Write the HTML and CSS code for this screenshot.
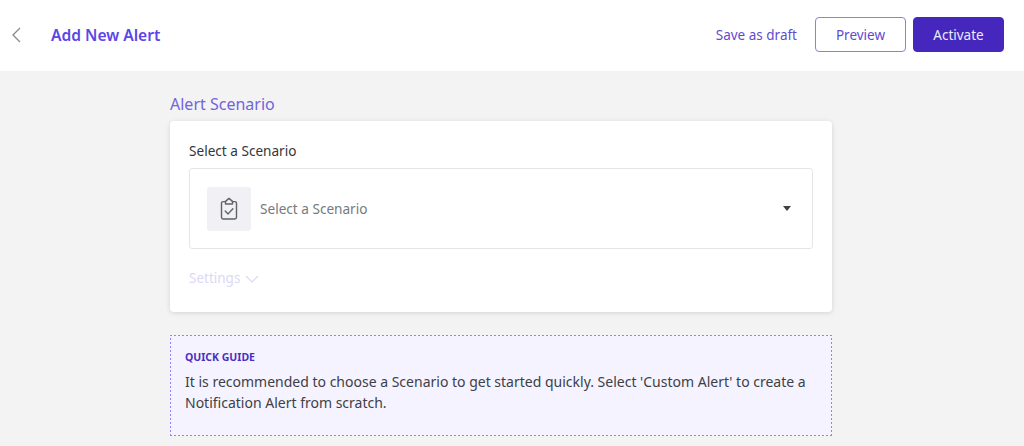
FILE: index.html
```html
<!DOCTYPE html>
<html lang="en">
<head>
<meta charset="utf-8">
<title>Add New Alert</title>
<link rel="stylesheet" href="styles.css">
</head>
<body>
<header class="topbar">
  <div class="topbar-left">
    <svg class="back" width="12" height="18" viewBox="0 0 12 18"><path d="M10 2 3 9l7 7" fill="none" stroke="#8a8a8a" stroke-width="1.3"/></svg>
    <h1 class="page-title">Add New Alert</h1>
  </div>
  <div class="topbar-actions">
    <span class="draft">Save as draft</span>
    <button class="btn btn-outline">Preview</button>
    <button class="btn btn-solid">Activate</button>
  </div>
</header>
<main class="content">
  <h2 class="section-title">Alert Scenario</h2>
  <section class="card">
    <div class="field-label">Select a Scenario</div>
    <div class="select">
      <div class="select-icon">
        <svg width="18" height="24" viewBox="0 0 18 24" fill="none" stroke="#5f6268" stroke-width="1.4" stroke-linejoin="round" stroke-linecap="round"><path d="M5.5 4.6H3.2A1.7 1.7 0 0 0 1.5 6.3v14a1.7 1.7 0 0 0 1.7 1.7h11.6a1.7 1.7 0 0 0 1.7-1.7v-14a1.7 1.7 0 0 0-1.7-1.7h-2.3"/><path d="M5.5 7V4.4L9 1.4l3.5 3V7z"/><path d="m5.2 14 2.9 2.9 4.8-5.2"/></svg>
      </div>
      <span class="select-text">Select a Scenario</span>
      <span class="caret"></span>
    </div>
    <div class="settings">Settings
      <svg width="14" height="8" viewBox="0 0 14 8"><path d="m1 1 6 6 6-6" fill="none" stroke="#dcd8f6" stroke-width="1.2"/></svg>
    </div>
  </section>
  <section class="guide">
    <div class="guide-title">QUICK GUIDE</div>
    <p class="guide-text">It is recommended to choose a Scenario to get started quickly. Select 'Custom Alert' to create a Notification Alert from scratch.</p>
  </section>
</main>
</body>
</html>
```
FILE: styles.css
```css
* { box-sizing: border-box; }
html, body { margin: 0; height: 100%; }
body {
  background: #f3f3f3;
  font-family: "Noto Sans", "Open Sans", sans-serif;
  overflow: hidden;
}
.topbar {
  height: 71px;
  background: #fff;
  display: flex;
  align-items: center;
  justify-content: space-between;
  padding: 0 20px 2px 10px;
}
.topbar-left { display: flex; align-items: center; }
.back { display: block; margin-right: 29px; }
.page-title {
  margin: 0;
  font-size: 15.6px;
  font-weight: 600;
  color: #5b46e8;
}
.topbar-actions { display: flex; align-items: center; }
.draft { font-size: 13.5px; color: #5f4bcf; margin-right: 18px; }
.btn {
  width: 91px;
  height: 35px;
  border-radius: 4px;
  font: inherit;
  font-size: 13.5px;
  padding: 0;
}
.btn-outline { background: #fff; border: 1px solid #8f7fe0; color: #5f4bcf; margin-right: 7px; }
.btn-solid { background: #4527bd; border: 1px solid #4527bd; color: #eeeafc; }
.content { width: 662px; margin-left: 170px; }
.section-title {
  margin: 0;
  height: 50px;
  padding-top: 21px;
  font-size: 16px;
  line-height: 24px;
  font-weight: 400;
  color: #7264dc;
}
.card {
  height: 191px;
  background: #fff;
  border-radius: 4px;
  box-shadow: 0 1px 5px rgba(0, 0, 0, .13);
  padding: 20px 19px 0;
}
.field-label { font-size: 13.6px; line-height: 20px; color: #33363b; margin-bottom: 7px; }
.select {
  height: 81px;
  border: 1px solid #e6e6e8;
  border-radius: 3px;
  display: flex;
  align-items: center;
  padding: 0 21px 0 17px;
}
.select-icon {
  width: 44px;
  height: 44px;
  background: #f0f0f5;
  border-radius: 3px;
  display: flex;
  align-items: center;
  justify-content: center;
  margin-right: 9px;
}
.select-text { flex: 1; font-size: 13.6px; color: #76797e; }
.caret {
  width: 0;
  height: 0;
  border-left: 4.5px solid transparent;
  border-right: 4.5px solid transparent;
  border-top: 5px solid #3c4047;
}
.settings {
  margin-top: 20px;
  font-size: 13.5px;
  line-height: 19px;
  color: #dcd8f6;
  display: flex;
  align-items: center;
  gap: 5px;
}
.guide {
  margin-top: 23px;
  height: 101px;
  background-color: #f5f3ff;
  background-image:
    repeating-linear-gradient(90deg, #9b80f2 0 2px, transparent 2px 4px),
    repeating-linear-gradient(90deg, #9b80f2 0 2px, transparent 2px 4px),
    repeating-linear-gradient(0deg, #9b80f2 0 2px, transparent 2px 4px),
    repeating-linear-gradient(0deg, #9b80f2 0 2px, transparent 2px 4px);
  background-size: 100% 1px, 100% 1px, 1px 100%, 1px 100%;
  background-position: 0 0, 0 100%, 0 0, 100% 0;
  background-repeat: no-repeat;
  padding: 14px 15px 0;
}
.guide-title { font-size: 10.5px; line-height: 16px; font-weight: 700; color: #4b2fc4; }
.guide-text { margin: 6px 0 0; font-size: 14px; line-height: 21px; color: #3d4046; }
```
